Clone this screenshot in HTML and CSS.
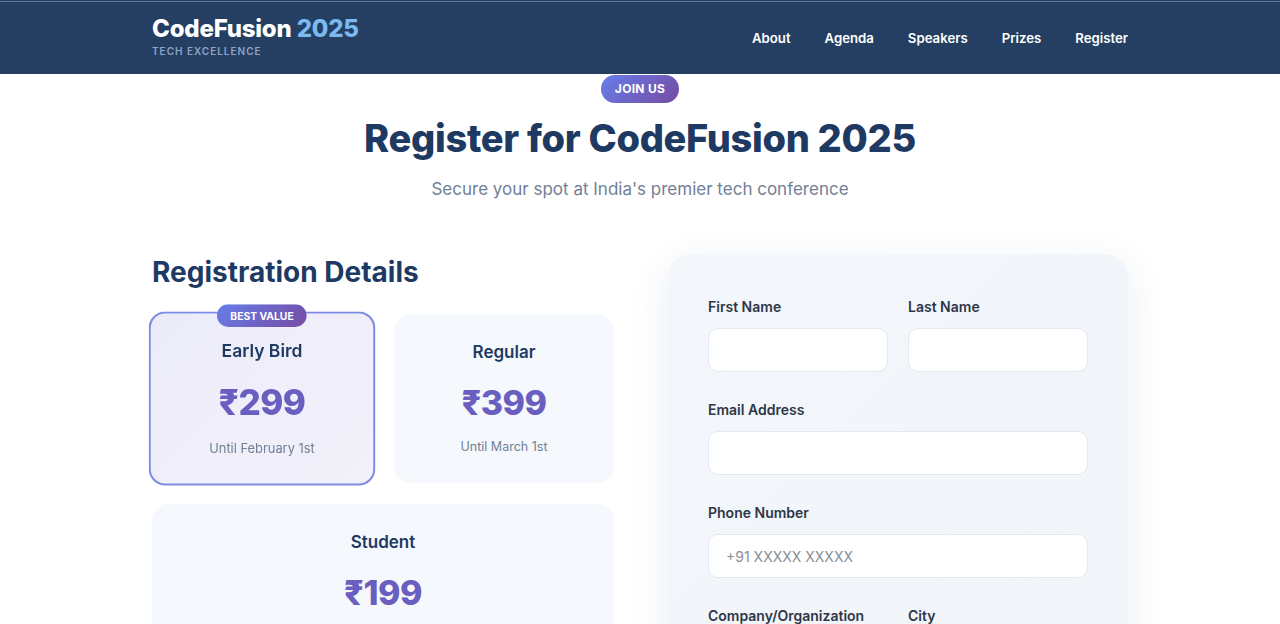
FILE: index.html
```html
<!DOCTYPE html>
<html lang="en">
<head>
<meta charset="utf-8">
<title>CodeFusion 2025 – Register</title>
<link rel="stylesheet" href="styles.css">
</head>
<body>
<header class="site-header">
  <div class="container header-inner">
    <div class="logo">
      <div class="logo-title">CodeFusion <span class="logo-year">2025</span></div>
      <div class="logo-tag">TECH EXCELLENCE</div>
    </div>
    <nav class="nav">
      <a href="#">About</a>
      <a href="#">Agenda</a>
      <a href="#">Speakers</a>
      <a href="#">Prizes</a>
      <a href="#">Register</a>
    </nav>
  </div>
</header>

<main class="register">
  <div class="container">
    <div class="section-head">
      <span class="pill">JOIN US</span>
      <h1 class="section-title">Register for CodeFusion 2025</h1>
      <p class="section-sub">Secure your spot at India's premier tech conference</p>
    </div>

    <div class="register-grid">
      <div class="details">
        <h2 class="details-title">Registration Details</h2>
        <div class="price-grid">
          <div class="price-card featured">
            <span class="best">BEST VALUE</span>
            <h3 class="price-name">Early Bird</h3>
            <div class="price">₹299</div>
            <p class="price-note">Until February 1st</p>
          </div>
          <div class="price-card">
            <h3 class="price-name">Regular</h3>
            <div class="price">₹399</div>
            <p class="price-note">Until March 1st</p>
          </div>
          <div class="price-card wide">
            <h3 class="price-name">Student</h3>
            <div class="price">₹199</div>
            <p class="price-note">With valid student ID</p>
          </div>
        </div>
      </div>

      <form class="form-card">
        <div class="row">
          <div class="group">
            <label>First Name</label>
            <input type="text">
          </div>
          <div class="group">
            <label>Last Name</label>
            <input type="text">
          </div>
        </div>
        <div class="group">
          <label>Email Address</label>
          <input type="email">
        </div>
        <div class="group">
          <label>Phone Number</label>
          <input type="tel" placeholder="+91 XXXXX XXXXX">
        </div>
        <div class="row">
          <div class="group">
            <label>Company/Organization</label>
            <input type="text">
          </div>
          <div class="group">
            <label>City</label>
            <input type="text">
          </div>
        </div>
      </form>
    </div>
  </div>
</main>
</body>
</html>
```

FILE: styles.css
```css
* { box-sizing: border-box; }
html, body { margin: 0; padding: 0; }
body {
  font-family: Inter, "Liberation Sans", sans-serif;
  color: #2d3748;
  background: #ffffff;
  overflow: hidden;
}
.container {
  width: 976px;
  margin: 0 auto;
}

/* Header */
.site-header {
  height: 74px;
  background: linear-gradient(#243f63 0 1px, #5b7aa1 1px 2px, #253f63 2px);
}
.header-inner {
  height: 100%;
  display: flex;
  align-items: center;
  justify-content: space-between;
}
.logo { margin-top: -2px; }
.logo-title {
  font-family: Inter, "Liberation Sans", sans-serif;
  font-weight: 800;
  font-size: 24px;
  line-height: 28px;
  color: #ffffff;
  letter-spacing: -0.2px;
}
.logo-year { color: #7bbaf0; }
.logo-tag {
  font-size: 10px;
  font-weight: 600;
  letter-spacing: 1px;
  color: #8ea4c2;
  margin-top: 2px;
}
.nav {
  display: flex;
  gap: 34px;
  padding-top: 1px;
}
.nav a {
  color: #ffffff;
  text-decoration: none;
  font-size: 13.2px;
  font-weight: 600;
}

/* Section head */
.section-head {
  display: flex;
  flex-direction: column;
  align-items: center;
  text-align: center;
}
.pill {
  display: inline-block;
  margin-top: 1px;
  height: 28px;
  line-height: 28px;
  padding: 0 14px;
  border-radius: 14px;
  background: linear-gradient(135deg, #667eea, #764ba2);
  color: #ffffff;
  font-size: 12px;
  font-weight: 700;
  letter-spacing: 0.3px;
}
.section-title {
  margin: 12px 0 0;
  font-size: 38px;
  line-height: 46px;
  font-weight: 800;
  color: #1e3a63;
  letter-spacing: -0.3px;
}
.section-sub {
  margin: 15px 0 0;
  font-size: 17px;
  line-height: 26px;
  color: #718096;
}

/* Main grid */
.register-grid {
  display: grid;
  grid-template-columns: 462px 460px;
  justify-content: space-between;
  margin-top: 52px;
}
.details-title {
  margin: 0 0 24px;
  font-size: 28px;
  line-height: 36px;
  font-weight: 700;
  color: #1e3a63;
  letter-spacing: 0;
}
.price-grid {
  display: grid;
  grid-template-columns: 1fr 1fr;
  column-gap: 22px;
  row-gap: 21px;
}
.price-card {
  position: relative;
  background: #f5f8fc;
  border-radius: 16px;
  padding: 25px 16px 26px;
  text-align: center;
}
.price-card.wide { grid-column: 1 / span 2; }
.price-card.featured {
  background: linear-gradient(135deg, #ecebf9, #f2f1fa);
  border: 2px solid #7d8be3;
  padding: 23px 14px 24px;
  transform: scale(1.03);
}
.best {
  position: absolute;
  top: -9px;
  left: 50%;
  transform: translateX(-50%);
  height: 22px;
  line-height: 22px;
  padding: 0 13px;
  border-radius: 11px;
  background: linear-gradient(135deg, #667eea, #764ba2);
  color: #ffffff;
  font-size: 10px;
  font-weight: 700;
  white-space: nowrap;
}
.price-name {
  margin: 0;
  font-size: 17px;
  line-height: 26px;
  font-weight: 600;
  color: #1e3a63;
}
.price {
  margin-top: 17px;
  font-size: 34px;
  line-height: 42px;
  font-weight: 800;
  color: #6a5fc1;
  letter-spacing: -0.5px;
}
.price-note {
  margin: 13px 0 0;
  font-size: 12.5px;
  line-height: 20px;
  color: #718096;
}

/* Form */
.form-card {
  background: linear-gradient(135deg, #f3f6fa, #f1f4f9);
  border-radius: 24px;
  padding: 42px 40px 40px;
  box-shadow: 0 10px 40px rgba(30, 58, 99, 0.09);
  height: 420px;
}
.row {
  display: grid;
  grid-template-columns: minmax(0, 1fr) minmax(0, 1fr);
  gap: 20px;
}
.group {
  display: flex;
  flex-direction: column;
  min-width: 0;
  margin-bottom: 27px;
}
.group label {
  font-size: 14px;
  line-height: 21px;
  font-weight: 600;
  color: #2d3748;
  margin-bottom: 11px;
}
.group input {
  width: 100%;
  min-width: 0;
  height: 44px;
  border: 1px solid #e2e8f0;
  border-radius: 10px;
  background: #ffffff;
  padding: 0 17px;
  font-family: Inter, "Liberation Sans", sans-serif;
  font-size: 14px;
  color: #2d3748;
  outline: none;
}
.group input::placeholder { color: #8a8f98; }
```
